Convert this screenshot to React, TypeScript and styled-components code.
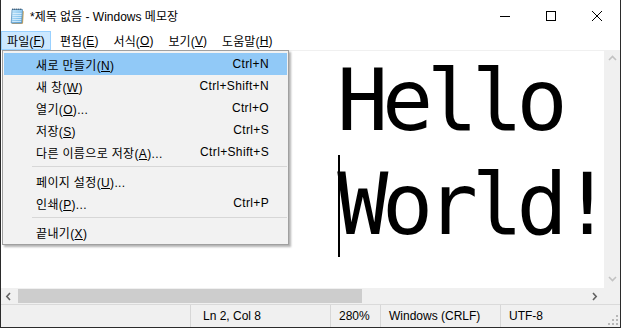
import React from "react";
import styled, { createGlobalStyle } from "styled-components";

const GlobalStyle = createGlobalStyle`
  html, body { margin: 0; padding: 0; background: #ffffff; overflow: hidden; }
  body {
    font-family: "Liberation Sans", "Noto Sans CJK KR", sans-serif;
    font-size: 12px;
    color: #000;
  }
`;

const Window = styled.div`
  position: relative;
  width: 621px;
  height: 328px;
  box-sizing: border-box;
  border: 1px solid #2b2b2b;
  border-top: none;
  display: flex;
  flex-direction: column;
  background: #fff;
  overflow: hidden;
`;

const TitleBar = styled.div`
  height: 31px;
  flex: none;
  display: flex;
  align-items: center;
  padding-left: 8px;
`;

const Title = styled.span`
  margin-left: 5px;
  flex: 1;
  white-space: nowrap;
  font-size: 12px;
`;

const Controls = styled.div`
  display: flex;
  align-self: stretch;
`;

const ControlButton = styled.div`
  width: 46px;
  display: flex;
  align-items: center;
  justify-content: center;
`;

const MenuBar = styled.div`
  height: 19px;
  flex: none;
  display: flex;
  gap: 3px;
`;

const MenuBarItem = styled.div<{ $open?: boolean }>`
  box-sizing: border-box;
  height: 19px;
  padding: 0 5px;
  display: flex;
  align-items: center;
  white-space: nowrap;
  letter-spacing: 0.1px;
  border: 1px solid ${(p) => (p.$open ? "#99d1ff" : "transparent")};
  background: ${(p) => (p.$open ? "#cce8ff" : "transparent")};
`;

const EditorRow = styled.div`
  flex: 1;
  min-height: 0;
  display: flex;
  border-top: 1px solid #f0f0f0;
`;

const EditArea = styled.div`
  flex: 1;
  min-width: 0;
  overflow: hidden;
  background: #fff;
`;

const EditText = styled.pre`
  margin: -2px 0 0 0;
  padding-left: 22px;
  font-family: "DejaVu Sans Mono", monospace;
  font-size: 85px;
  line-height: 104px;
  letter-spacing: -6.3px;
  color: #000;
  white-space: pre;
`;

const Caret = styled.span`
  display: inline-block;
  width: 2px;
  height: 102px;
  margin-top: 2px;
  margin-left: 1px;
  margin-right: -3px;
  vertical-align: top;
  background: #000;
`;

const VScroll = styled.div`
  width: 16px;
  flex: none;
  background: #f0f0f0;
  display: flex;
  flex-direction: column;
  justify-content: space-between;
`;

const ScrollButton = styled.div<{ $w: number; $h: number }>`
  width: ${(p) => p.$w}px;
  height: ${(p) => p.$h}px;
  flex: none;
  display: flex;
  align-items: center;
  justify-content: center;
`;

const HScrollRow = styled.div`
  height: 16px;
  flex: none;
  display: flex;
  background: #f0f0f0;
`;

const HScroll = styled.div`
  flex: 1;
  display: flex;
  align-items: center;
`;

const Track = styled.div`
  flex: 1;
  align-self: stretch;
  display: flex;
  align-items: center;
`;

const Thumb = styled.div`
  height: 14px;
  background: #cdcdcd;
`;

const Corner = styled.div`
  width: 16px;
  flex: none;
`;

const StatusBar = styled.div`
  height: 23px;
  flex: none;
  box-sizing: border-box;
  border-top: 1px solid #dadada;
  background: #f0f0f0;
  display: grid;
  grid-template-columns: 189px 140px 50px 120px 1fr;
`;

const StatusCell = styled.div<{ $pad: number; $sep?: boolean }>`
  display: flex;
  align-items: center;
  padding-left: ${(p) => p.$pad}px;
  border-left: ${(p) => (p.$sep ? "1px solid #d7d7d7" : "none")};
  white-space: nowrap;
`;

const Grip = styled.svg`
  margin-left: auto;
  align-self: flex-end;
  margin-right: 2px;
  margin-bottom: 2px;
`;

const Dropdown = styled.div`
  position: absolute;
  top: 50px;
  left: 1px;
  width: 287px;
  box-sizing: border-box;
  background: #f2f2f2;
  border: 1px solid #a0a0a0;
  padding: 2px 1px 1px;
  box-shadow: 2px 2px 2px rgba(0, 0, 0, 0.3);
  z-index: 10;
`;

const DropItem = styled.div<{ $active?: boolean }>`
  height: 22px;
  display: flex;
  align-items: center;
  justify-content: space-between;
  padding: 0 18px 0 32px;
  white-space: nowrap;
  letter-spacing: 0.35px;
  background: ${(p) => (p.$active ? "#91c9f7" : "transparent")};
`;

const Separator = styled.div`
  height: 7px;
  display: flex;
  align-items: center;
  padding-left: 28px;
  &::after {
    content: "";
    flex: 1;
    height: 1px;
    background: #d7d7d7;
  }
`;

const NotepadIcon = () => (
  <svg width="16" height="17" viewBox="0 0 16 17">
    <defs>
      <linearGradient id="npg" x1="0" y1="0" x2="1" y2="1">
        <stop offset="0" stopColor="#c6e8fc" />
        <stop offset="1" stopColor="#62aee4" />
      </linearGradient>
    </defs>
    <path d="M13.5 3.5 L14.8 4.6 L14 16.8 L12.6 16 Z" fill="#c9a35a" />
    <path d="M2.5 16 L12.6 16 L14 16.8 L3.4 16.8 Z" fill="#b08a46" />
    <path d="M3 2.5 L13.5 2.5 L12.7 16 L2.2 16 Z" fill="url(#npg)" stroke="#4b84b2" strokeWidth="0.7" />
    <path d="M3.6 6.5 H12.6 M3.5 8.5 H12.5 M3.4 10.5 H12.4 M3.3 12.5 H12.3 M3.2 14.5 H12.2" stroke="#e8f6ff" strokeWidth="0.7" />
    <path d="M3.3 2.2 H13.3" stroke="#2f4d66" strokeWidth="1.6" strokeDasharray="1 1" />
  </svg>
);

const MinIcon = () => (
  <svg width="10" height="10" viewBox="0 0 10 10">
    <path d="M0 5.5 H10" stroke="#000" strokeWidth="1" />
  </svg>
);

const MaxIcon = () => (
  <svg width="10" height="10" viewBox="0 0 10 10">
    <rect x="0.5" y="0.5" width="9" height="9" fill="none" stroke="#000" strokeWidth="1" />
  </svg>
);

const CloseIcon = () => (
  <svg width="10" height="10" viewBox="0 0 10 10">
    <path d="M0 0 L10 10 M10 0 L0 10" stroke="#000" strokeWidth="1" />
  </svg>
);

const Chevron = ({ dir, color }: { dir: "up" | "down" | "left" | "right"; color: string }) => {
  const d: Record<string, string> = {
    up: "M1 5 L4.5 1.5 L8 5",
    down: "M1 2 L4.5 5.5 L8 2",
    left: "M5 1 L1.8 4.5 L5 8",
    right: "M2 1 L5.2 4.5 L2 8",
  };
  return (
    <svg width="9" height="9" viewBox="0 0 9 9">
      <path d={d[dir]} fill="none" stroke={color} strokeWidth="1.6" />
    </svg>
  );
};

const GripIcon = () => (
  <Grip width="10" height="10" viewBox="0 0 10 10">
    {[
      [8, 0],
      [8, 4], [4, 4],
      [8, 8], [4, 8], [0, 8],
    ].map(([x, y], i) => (
      <rect key={i} x={x} y={y} width="2" height="2" fill="#b8b8b8" />
    ))}
  </Grip>
);

const menus: [string, string][] = [
  ["파일", "F"],
  ["편집", "E"],
  ["서식", "O"],
  ["보기", "V"],
  ["도움말", "H"],
];

type Entry = { label: string; key: string; tail?: string; shortcut?: string; active?: boolean } | "sep";

const fileMenu: Entry[] = [
  { label: "새로 만들기", key: "N", shortcut: "Ctrl+N", active: true },
  { label: "새 창", key: "W", shortcut: "Ctrl+Shift+N" },
  { label: "열기", key: "O", tail: "...", shortcut: "Ctrl+O" },
  { label: "저장", key: "S", shortcut: "Ctrl+S" },
  { label: "다른 이름으로 저장", key: "A", tail: "...", shortcut: "Ctrl+Shift+S" },
  "sep",
  { label: "페이지 설정", key: "U", tail: "..." },
  { label: "인쇄", key: "P", tail: "...", shortcut: "Ctrl+P" },
  "sep",
  { label: "끝내기", key: "X" },
];

export default function App() {
  return (
    <>
      <GlobalStyle />
      <Window>
        <TitleBar>
          <NotepadIcon />
          <Title>*제목 없음 - Windows 메모장</Title>
          <Controls>
            <ControlButton><MinIcon /></ControlButton>
            <ControlButton><MaxIcon /></ControlButton>
            <ControlButton><CloseIcon /></ControlButton>
          </Controls>
        </TitleBar>
        <MenuBar>
          {menus.map(([name, k], i) => (
            <MenuBarItem key={name} $open={i === 0}>
              {name}(<u>{k}</u>)
            </MenuBarItem>
          ))}
        </MenuBar>
        <EditorRow>
          <EditArea>
            <EditText>
              {"       Hello\n       "}
              <Caret />
              {"World!"}
            </EditText>
          </EditArea>
          <VScroll>
            <ScrollButton $w={16} $h={17}><Chevron dir="up" color="#c2c2c2" /></ScrollButton>
            <ScrollButton $w={16} $h={17}><Chevron dir="down" color="#c2c2c2" /></ScrollButton>
          </VScroll>
        </EditorRow>
        <HScrollRow>
          <HScroll>
            <ScrollButton $w={17} $h={16}><Chevron dir="left" color="#606060" /></ScrollButton>
            <Track>
              <Thumb style={{ width: "60.5%" }} />
            </Track>
            <ScrollButton $w={17} $h={16}><Chevron dir="right" color="#606060" /></ScrollButton>
          </HScroll>
          <Corner />
        </HScrollRow>
        <StatusBar>
          <StatusCell $pad={0} />
          <StatusCell $pad={12} $sep>Ln 2, Col 8</StatusCell>
          <StatusCell $pad={8} $sep>280%</StatusCell>
          <StatusCell $pad={8} $sep>Windows (CRLF)</StatusCell>
          <StatusCell $pad={8} $sep>
            UTF-8
            <GripIcon />
          </StatusCell>
        </StatusBar>
        <Dropdown>
          {fileMenu.map((e, i) =>
            e === "sep" ? (
              <Separator key={i} />
            ) : (
              <DropItem key={i} $active={e.active}>
                <span>
                  {e.label}(<u>{e.key}</u>){e.tail ?? ""}
                </span>
                <span>{e.shortcut ?? ""}</span>
              </DropItem>
            )
          )}
        </Dropdown>
      </Window>
    </>
  );
}
